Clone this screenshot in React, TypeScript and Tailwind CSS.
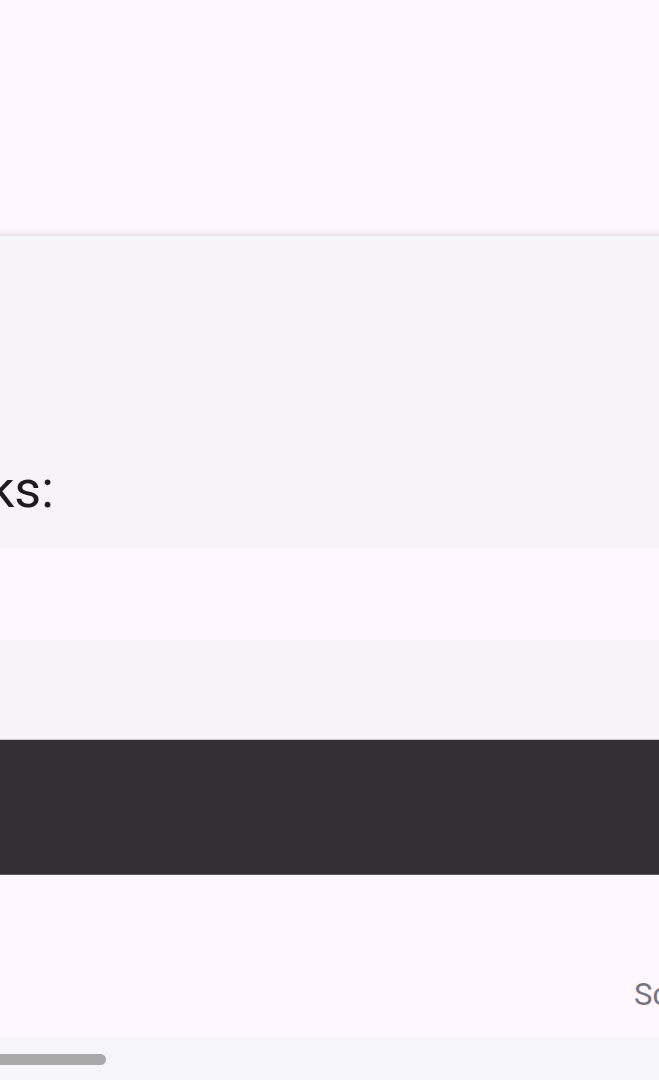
import React from "react";

export default function App() {
  return (
    <div
      className="relative w-[659px] h-[1080px] overflow-hidden bg-[#fef7ff] flex flex-col"
      style={{ fontFamily: "Roboto, 'Noto Sans', sans-serif" }}
    >
      {/* top surface */}
      <div className="h-[228px] shrink-0 bg-[#fef7ff]" />
      <div className="h-[6px] shrink-0 bg-gradient-to-b from-[#fef7ff] to-[#f1ecf3]" />
      <div className="h-[2px] shrink-0 bg-[#ece7ef]" />

      {/* gray section with heading */}
      <div className="h-[312px] shrink-0 bg-[#f6f4f8] flex items-end pb-[32px]">
        <span className="ml-[-12px] text-[52px] leading-none text-[#1d1b20] tracking-normal">
          ks:
        </span>
      </div>

      {/* pink gap */}
      <div className="h-[92px] shrink-0 bg-[#fef7ff]" />

      {/* gray band */}
      <div className="h-[100px] shrink-0 bg-[#f6f4f8] border-b border-[#cbc6cd]" />

      {/* dark band */}
      <div className="h-[135px] shrink-0 bg-[#322f35] border-b border-[#5e5a62]" />

      {/* bottom pink with clipped text */}
      <div className="h-[162px] shrink-0 bg-[#fef7ff] flex items-start pt-[104px] pl-[634px]">
        <span className="text-[31px] leading-none text-[#79747e] whitespace-nowrap">
          Sc
        </span>
      </div>

      {/* scrollbar track */}
      <div className="flex-1 bg-[#f6f6f8] flex items-center">
        <div className="h-[11px] w-[106px] rounded-r-full bg-[#a9a9a9] mt-[1px]" />
      </div>
    </div>
  );
}
